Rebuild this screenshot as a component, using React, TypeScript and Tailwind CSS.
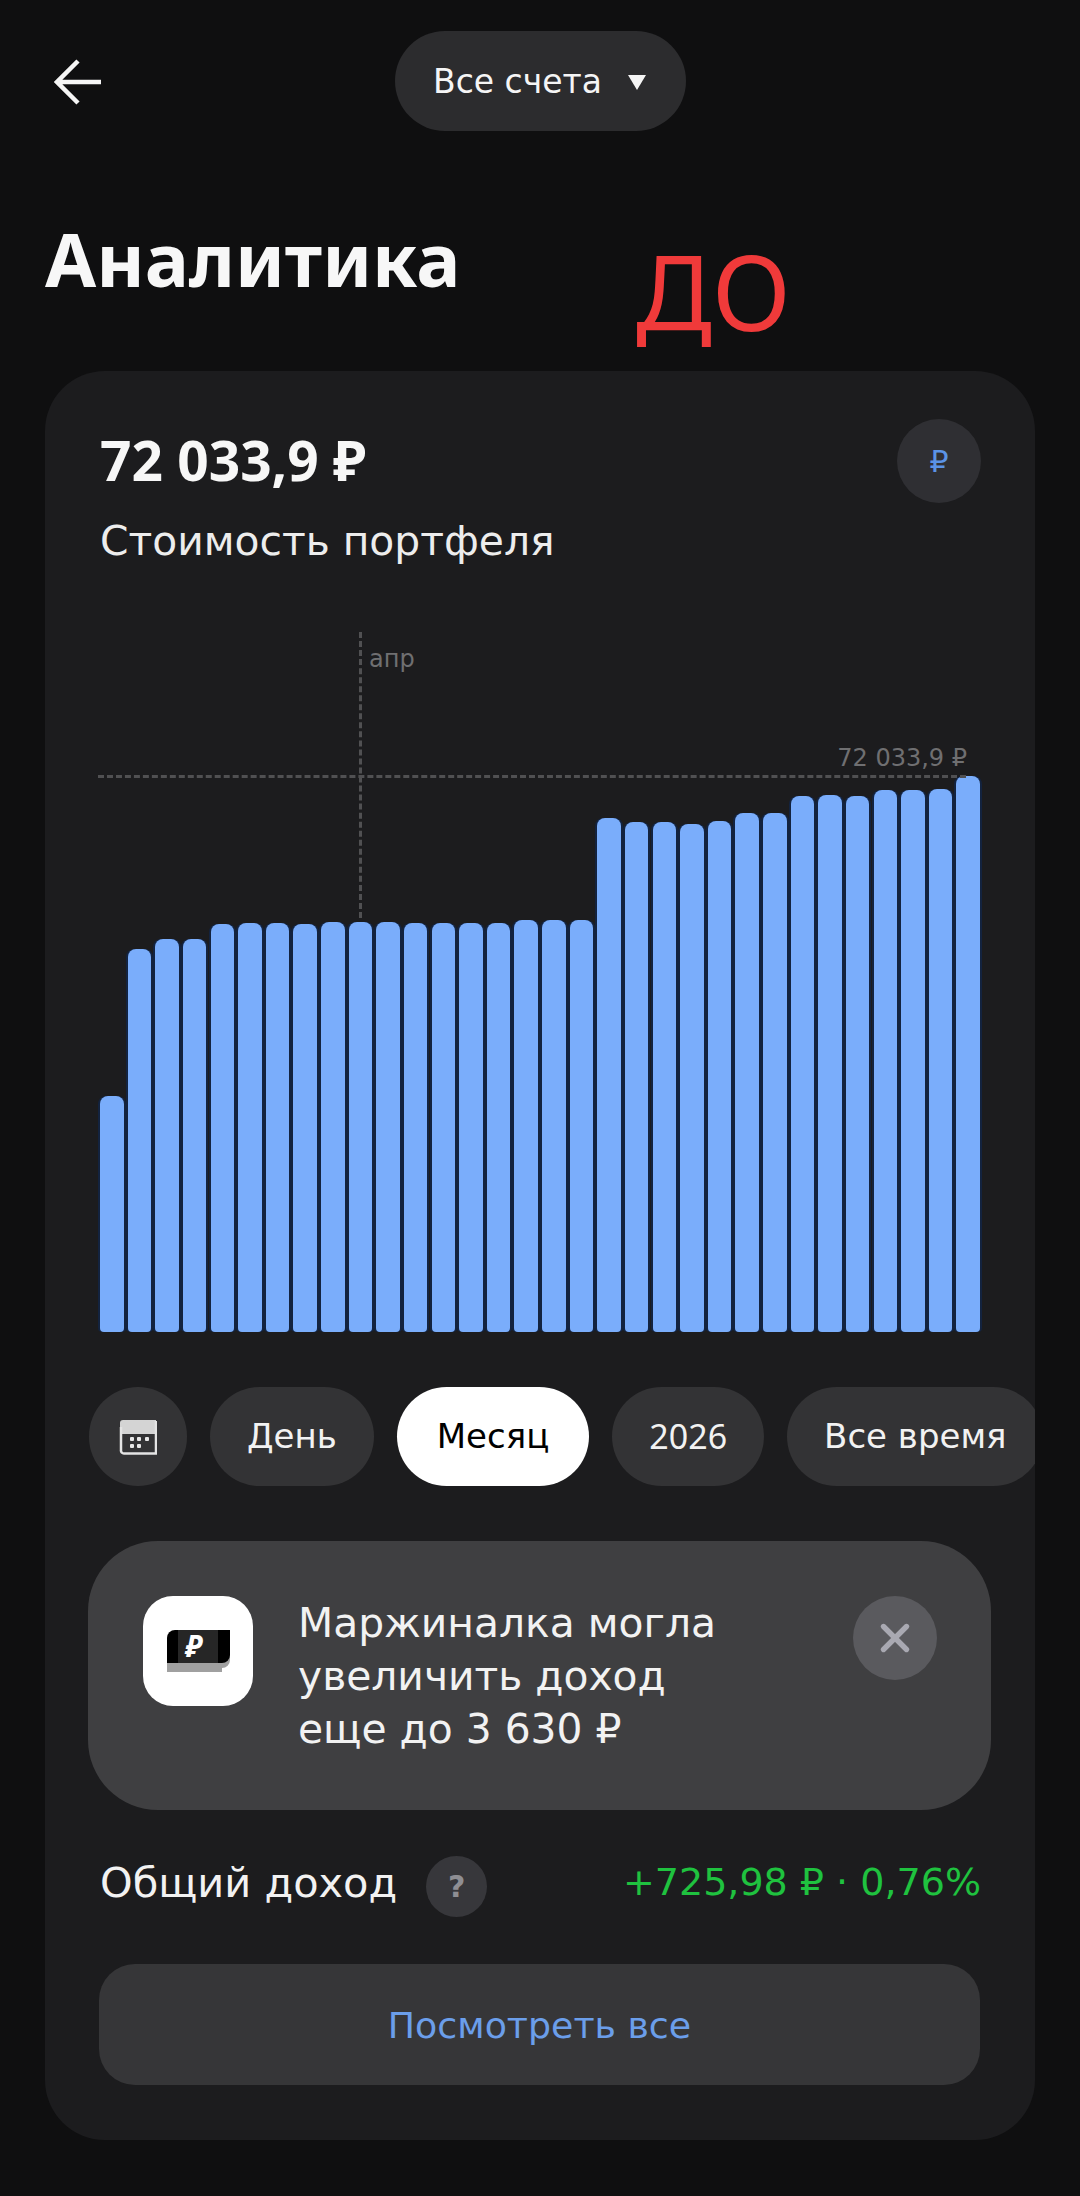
import { X } from "lucide-react";

const BODY = "font-['DejaVu_Sans',sans-serif]";
const HEAD = "font-['Noto_Sans',sans-serif]";

// Bar tops in page pixels; the chart baseline is at 1332.
const BAR_TOPS = [
  1096, 949, 939, 939, 924, 923, 923, 924, 922, 922, 922, 923, 923, 923, 923, 920, 920, 920,
  818, 822, 822, 824, 821, 813, 813, 796, 795, 796, 790, 790, 789, 776,
];

function Pill({ label, active, digits }: { label: string; active?: boolean; digits?: boolean }) {
  return (
    <div
      className={`flex h-[99px] shrink-0 items-center rounded-full text-[34px] ${digits ? HEAD : ""} ${
        active ? "bg-white px-[40px] text-black" : "bg-[#333335] px-[37px] text-[#f2f2f2]"
      }`}
    >
      {label}
    </div>
  );
}

function CalendarIcon() {
  return (
    <svg width="38" height="36" viewBox="0 0 38 36" fill="none">
      <path d="M4 1h33v14H1V4a3 3 0 0 1 3-3z" fill="#d4d4d4" />
      <path d="M2 8v23a3 3 0 0 0 3 3.500h32V2" stroke="#e4e4e4" strokeWidth="2.500" />
      <g fill="#e8e8e8">
        <rect x="11" y="18" width="4" height="4" rx="1" />
        <rect x="18" y="18" width="4" height="4" rx="1" />
        <rect x="26" y="18" width="4" height="4" rx="1" />
        <rect x="11" y="25" width="4" height="4" rx="1" />
        <rect x="18" y="25" width="4" height="4" rx="1" />
      </g>
    </svg>
  );
}

function MarginIcon() {
  return (
    <div className="relative flex h-[110px] w-[110px] shrink-0 items-center justify-center rounded-[30px] bg-white">
      <svg width="63" height="42" viewBox="0 0 63 42">
        <path d="M0 12a8 8 0 0 1 8-8h55v26a8 8 0 0 1-8 8v4H0z" fill="#a0a0a0" />
        <path d="M0 8a8 8 0 0 1 8-8h55v25a8 8 0 0 1-8 8H0z" fill="#000" />
        <rect x="11" y="0" width="40" height="33" fill="#262626" />
      </svg>
      <span className="absolute left-[42px] top-[30px] font-['Noto_Sans',sans-serif] text-[30px] leading-[40px] font-bold text-white italic">
        ₽
      </span>
    </div>
  );
}

export default function App() {
  return (
    <div className={`h-[2196px] w-[1080px] overflow-hidden bg-[#0f0f10] text-white ${BODY}`}>
      {/* Top bar */}
      <div className="relative flex justify-center pt-[31px]">
        <svg className="absolute left-[54px] top-[59px]" width="48" height="46" viewBox="0 0 48 46" fill="none">
          <path d="M47 23H4M24 2 3 23l21 21" stroke="#f5f5f5" strokeWidth="4.500" strokeLinejoin="miter" />
        </svg>
        <div className="flex h-[100px] w-[291px] items-center justify-center gap-[25px] rounded-full bg-[#2c2c2e] pt-[2px] text-[33px] text-[#f5f5f5]">
          <span>Все счета</span>
          <svg width="20" height="18" viewBox="0 0 20 18">
            <path d="M1 2h18l-9 15z" fill="#f5f5f5" />
          </svg>
        </div>
      </div>

      <div className="relative">
        <h1 className={`mt-[78px] pl-[45px] text-[74px] leading-[100px] font-bold text-[#f7f7f7] ${HEAD}`}>Аналитика</h1>
        <div className={`absolute left-[636px] top-[22px] text-[104px] leading-[120px] text-[#f03a3a] ${HEAD}`}>ДО</div>
      </div>

      {/* Card */}
      <div className="ml-[45px] mt-[62px] h-[1769px] w-[990px] overflow-hidden rounded-[60px] bg-[#1c1c1e]">
        <div className="flex items-start justify-between pl-[55px] pr-[54px] pt-[48px]">
          <div className="pt-[7px]">
            <div className={`text-[55px] leading-[68px] font-bold text-[#f7f7f7] ${HEAD}`}>72 033,9 ₽</div>
            <div className="mt-[20px] text-[40.800px] leading-[54px] text-[#ededed]">Стоимость портфеля</div>
          </div>
          <div className="flex h-[84px] w-[84px] items-center justify-center rounded-full bg-[#2f2f33] text-[30px] text-[#5b93e6]">
            ₽
          </div>
        </div>

        {/* Chart */}
        <div className="relative ml-[55px] mt-[64px] flex h-[700px] w-[880px] items-end justify-between">
          {BAR_TOPS.map((top, i) => (
            <div
              key={i}
              className="w-[23.5px] rounded-t-[8px] rounded-b-[4px] bg-[#7aadfb] shadow-[2px_0_0_#13233f,-2px_0_0_#13233f]"
              style={{ height: 1332 - top }}
            />
          ))}
          <div className="absolute left-[259px] top-0 h-[286px] border-l-[3px] border-dashed border-[#505052]" />
          <div className="absolute left-[-2px] top-[143px] w-[868px] border-t-[3px] border-dashed border-[#505052]" />
          <div className="absolute left-[269px] top-[9px] text-[24px] leading-[36px] text-[#6f6f71]">апр</div>
          <div className="absolute right-[13px] top-[108px] text-[24px] leading-[36px] text-[#6f6f71]">72 033,9 ₽</div>
        </div>

        {/* Period filter */}
        <div className="ml-[44px] mt-[55px] flex gap-[23px]">
          <div className="flex h-[99px] w-[98px] shrink-0 items-center justify-center rounded-full bg-[#333335]">
            <CalendarIcon />
          </div>
          <Pill label="День" />
          <Pill label="Месяц" active />
          <Pill label="2026" digits />
          <Pill label="Все время" />
        </div>

        {/* Banner */}
        <div className="ml-[43px] mt-[55px] flex h-[269px] w-[903px] items-start rounded-[70px] bg-[#3f3f41] pl-[55px] pr-[54px] pt-[55px]">
          <MarginIcon />
          <div className="ml-[45px] flex-1 pt-[1px] text-[40.800px] leading-[53px] text-[#f2f2f2]">
            Маржиналка могла
            <br />
            увеличить доход
            <br />
            еще до 3 630 ₽
          </div>
          <div className="flex h-[84px] w-[84px] shrink-0 items-center justify-center rounded-full bg-[#5a5a5e]">
            <X size={46} strokeWidth={2.8} color="#a9a9b2" />
          </div>
        </div>

        {/* Total income */}
        <div className="mt-[42px] flex items-center pl-[55px] pr-[54px]">
          <span className="pb-[8px] text-[41.500px] leading-[61px] text-[#f2f2f2]">Общий доход</span>
          <div className="ml-[29px] flex h-[61px] w-[61px] items-center justify-center rounded-full bg-[#37373b] text-[30px] font-bold text-[#8e8e93]">
            ?
          </div>
          <span className="ml-auto pb-[8px] text-[38px] leading-[61px] text-[#1fc23f]">+725,98 ₽ · 0,76%</span>
        </div>

        <div className="ml-[54px] mt-[43px] flex h-[121px] w-[881px] items-center justify-center rounded-[36px] bg-[#363638] pt-[3px] text-[36.300px] text-[#6b9eea]">
          Посмотреть все
        </div>
      </div>
    </div>
  );
}
